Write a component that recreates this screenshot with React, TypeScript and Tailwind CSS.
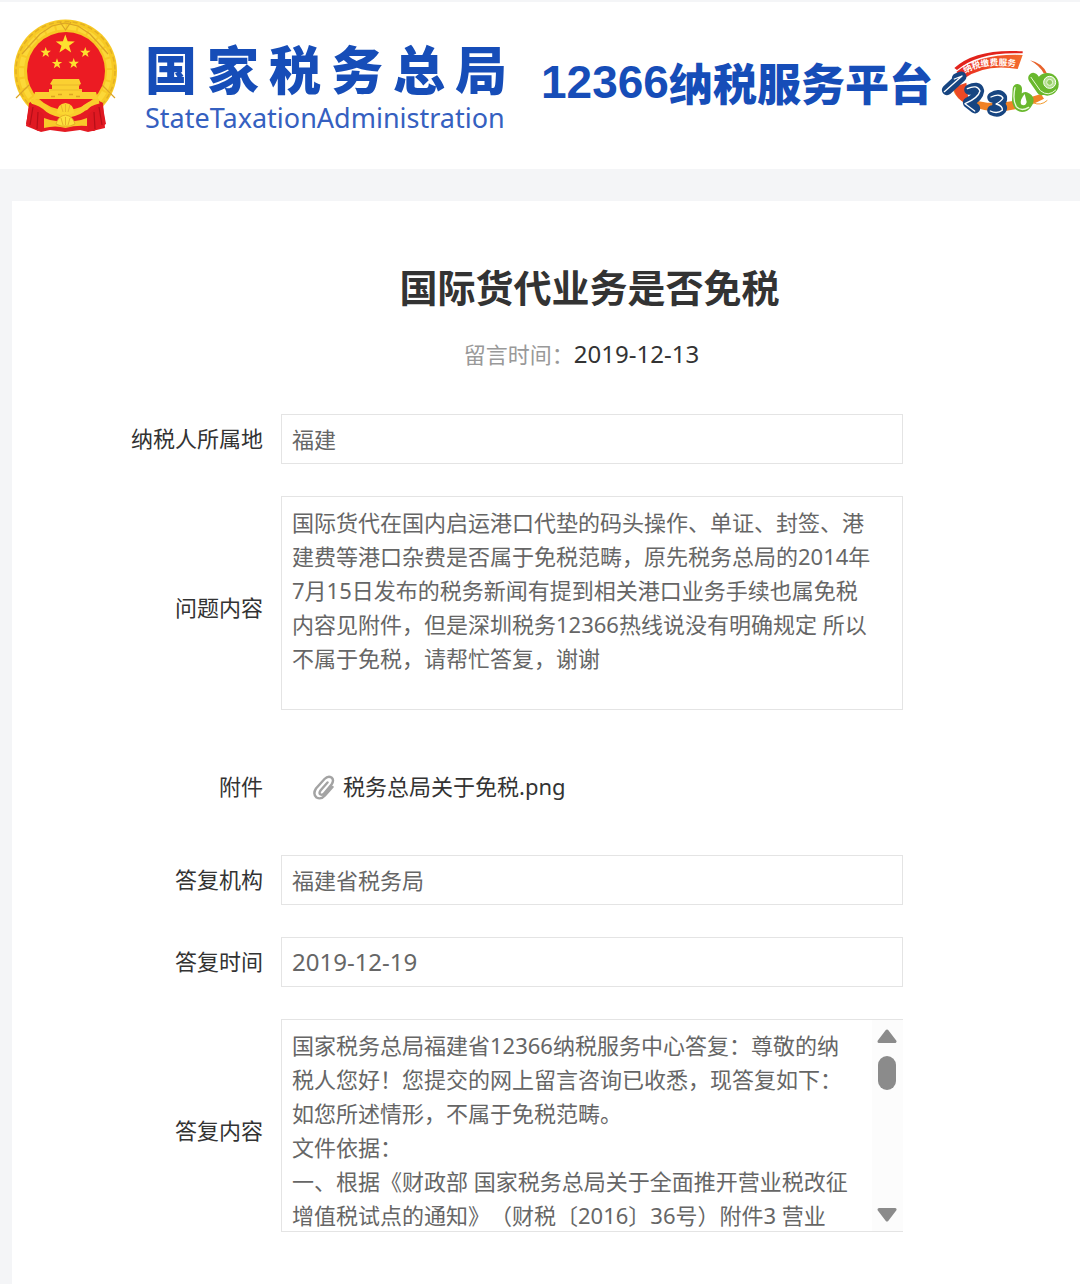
import type { ReactNode } from "react";

const QUESTION =
  "国际货代在国内启运港口代垫的码头操作、单证、封签、港建费等港口杂费是否属于免税范畴，原先税务总局的2014年7月15日发布的税务新闻有提到相关港口业务手续也属免税\n内容见附件，但是深圳税务12366热线说没有明确规定 所以不属于免税，请帮忙答复，谢谢";

const ANSWER =
  "国家税务总局福建省12366纳税服务中心答复：尊敬的纳税人您好！您提交的网上留言咨询已收悉，现答复如下：\n如您所述情形，不属于免税范畴。\n文件依据：\n一、根据《财政部 国家税务总局关于全面推开营业税改征增值税试点的通知》（财税〔2016〕36号）附件3 营业";

const STAR = "M0-10 2.4-3.2 9.5-3.1 3.8 1.2 5.9 8.1 0 4 -5.9 8.1 -3.8 1.2 -9.5-3.1 -2.4-3.2Z";

function Emblem() {
  return (
    <svg viewBox="13 19 104 114" className="h-[114px] w-[104px] shrink-0" role="img" aria-label="国徽">
      <circle cx="65.5" cy="71" r="51.5" fill="#f7c925" />
      <circle cx="65.5" cy="71" r="49.5" fill="none" stroke="#e3b024" strokeWidth="1.5" strokeDasharray="5 3" />
      <circle cx="65.5" cy="71" r="44" fill="none" stroke="#fcd838" strokeWidth="5" strokeDasharray="9 2" />
      <path d="M22 54l8-9 10-11 12-8 13-3 13 3 12 8 10 11 8 9M16 98l13-13M115 98l-13-13M60 22l5.500 8 5.500-8" fill="none" stroke="#dba426" strokeWidth="1.200" />
      <circle cx="66" cy="71" r="39" fill="#ec1b23" />
      <path d="M29 103l6-3 10 10 20 6 22-6 10-10 6 3 2 25-17 4-8-2-15 2-15-2-9 2-15-6z" fill="#e51b23" />
      <g fill="#fde02f">
        <path d={STAR} transform="translate(65.300 44.500)" />
        <path d={STAR} transform="translate(45.700 52.500) scale(.55)" />
        <path d={STAR} transform="translate(85.300 52.500) scale(.55)" />
        <path d={STAR} transform="translate(57 63.700) scale(.55)" />
        <path d={STAR} transform="translate(73.700 63.500) scale(.55)" />
      </g>
      <path d="M53 79h26l2 5-2 1v4h3v3h14l2 7H33l2-7h14v-3h3v-4l-2-1z" fill="#fbd031" />
      <path d="M52 85h28M50 90h32" stroke="#eab82b" strokeWidth="1" />
      <path d="M51 96.500h4M58 94.500h4M69 94.500h4M76 96.500h4" stroke="#dca322" strokeWidth="1.500" />
      <path d="M31 101q10 2 17 9 7 5 17 5t17-5q7-7 17-9" fill="none" stroke="#f9cd2c" strokeWidth="5" />
      <path d="M57 113q0-9 8.500-10 8.500 1 8.500 10-8 4-17 0z" fill="#fbd631" />
      <path d="M65.500 104v8M61 105l2 7M70 105l-2 7" stroke="#e8b62b" strokeWidth="1" />
      <path d="M44 118q12 5 21.500 2 10 3 21.500-2v8q-11-1-21.500 2-10-3-21.500 0z" fill="#f8c92a" />
      <path d="M56 124q2-8 9.500-9 7.500 1 9.500 9l-5 2h-9z" fill="#fde13c" stroke="#e0a524" strokeWidth=".8" />
      <path d="M65.500 117v8M61 118l2 7M70 118l-2 7" stroke="#e0a524" strokeWidth=".8" />
      <path d="M30 102l14 13v16l-6 0-12-7z" fill="#e01922" />
      <path d="M102 102l-14 13v16l6 0 12-7z" fill="#e01922" />
      <path d="M33 107l-3 18M38 112l-1 17M99 107l3 18M94 112l1 17" stroke="#b50f18" strokeWidth="1.200" />
    </svg>
  );
}

function BureauName() {
  return (
    <svg viewBox="0 0 364 112" className="h-[112px] w-[364px] shrink-0" fill="#164db8">
      <text x="0 62 124 186 248 310" y="63" fontSize="52" fontWeight="900" fontFamily="'Noto Sans CJK SC', sans-serif">
        国家税务总局
      </text>
      <text x="0" y="101" fontSize="27" fill="#3560c0" fontFamily="'Noto Sans', sans-serif">
        StateTaxationAdministration
      </text>
    </svg>
  );
}

function HotlineBadge() {
  return (
    <svg viewBox="0 0 420 270" className="h-[90px] w-[140px] shrink-0" role="img" aria-label="12366">
      <defs>
        <path id="band" d="M108 100Q165 66 272 81" />
        <linearGradient id="swoosh" x1="0" y1="0" x2="1" y2="0">
          <stop offset="0" stopColor="#e9261f" />
          <stop offset="1" stopColor="#f36c2c" />
        </linearGradient>
      </defs>
      <path d="M76 84Q140 25 281 34L281 40Q150 34 84 90Z" fill="#e2231c" />
      <path d="M82 96Q150 40 281 45L266 87Q170 70 104 116Z" fill="url(#swoosh)" />
      <path d="M78 132Q84 176 175 188Q255 190 336 162L345 176Q270 216 190 214Q90 200 72 150Z" fill="#f08226" />
      <path d="M74 142Q82 184 120 192L112 128Z" fill="#ed4925" />
      <path d="M303 61Q343 70 355 103L344 100Q333 78 303 61Z" fill="#e8632c" />
      <path d="M312 188Q335 199 355 181" fill="none" stroke="#f39a2b" strokeWidth="3" />
      <text fontSize="26" fontWeight="700" fill="#fff" fontFamily="'Noto Sans CJK SC', sans-serif">
        <textPath href="#band">纳税缴费服务</textPath>
      </text>
      <g fill="none" strokeLinecap="round" strokeLinejoin="round">
        <g stroke="#174581" strokeWidth="31">
          <path d="M54 150L97 110L84 115" />
          <path d="M121 149Q147 136 150 153Q148 172 117 188L138 205" />
          <path d="M190 172Q210 159 219 173Q221 184 205 192Q223 199 217 208Q207 219 190 211" />
        </g>
        <g stroke="#fff" strokeWidth="4">
          <path d="M46 155L99 108L76 117" />
          <path d="M115 146Q145 132 153 153Q148 174 108 191L137 213" />
          <path d="M186 171Q213 158 222 174Q217 184 201 192Q222 197 220 211Q204 223 184 213" />
        </g>
        <path d="M265 146L263 182Q268 208 288 200Q311 178 289 170Q278 176 269 192" fill="#69b82d" stroke="#69b82d" strokeWidth="28" />
        <path d="M258 143Q250 180 262 200Q277 216 299 202" stroke="#eafbd9" strokeWidth="4" />
        <path d="M313 114L338 150" stroke="#69b82d" strokeWidth="31" />
      </g>
      <circle cx="355" cy="133" r="34" fill="#69b82d" />
      <circle cx="362" cy="127" r="18" fill="#b5df91" stroke="#fff" strokeWidth="3" />
      <circle cx="362" cy="127" r="9" fill="#92cc61" stroke="#eafbd9" strokeWidth="3" />
      <path d="M306 112L334 152Q358 172 380 150" fill="none" stroke="#eafbd9" strokeWidth="3" strokeLinecap="round" />
      <path d="M287 162Q271 182 276 193Q289 201 293 186Z" fill="#fff" />
    </svg>
  );
}

function PaperClip() {
  return (
    <svg viewBox="0 0 22 26" className="h-[26px] w-[22px] shrink-0" fill="none" strokeLinecap="round" aria-hidden="true">
      <path
        d="M14.500 8.500L7.500 16.500Q5.500 19.500 7.500 20.500Q9.500 21.500 11.500 19L18.500 10.500Q21.500 6 18.500 3.500Q15 1.500 11.500 5L3 14.500Q-.5 20 3.500 23.500Q8 26 12 21.500L19.500 13"
        stroke="#a3a3a3"
        strokeWidth="2.400"
      />
    </svg>
  );
}

function Row({ label, htmlFor, tall, children }: { label: string; htmlFor?: string; tall?: boolean; children: ReactNode }) {
  const cls = "w-[251px] shrink-0 text-right leading-8 text-[#333]";
  return (
    <div className="flex items-center gap-[18px]">
      {htmlFor ? (
        <label htmlFor={htmlFor} className={tall ? cls + " pt-2" : cls + " pb-0.5"}>
          {label}
        </label>
      ) : (
        <span className={cls + " pt-1.5"}>{label}</span>
      )}
      <div className="min-w-0 flex-1">{children}</div>
    </div>
  );
}

const INPUT = "block h-[50px] w-full border border-[#e4e4e4] bg-white px-[10px] pb-0.5 text-[#666] outline-none";

export default function App() {
  return (
    <div className="h-screen overflow-hidden bg-[#f4f5f7] font-['Noto_Sans','Noto_Sans_CJK_SC',sans-serif] text-[22px] [text-spacing-trim:space-all]">
      <header className="flex h-[169px] items-start border-t-2 border-[#f4f5f7] bg-white pt-[17px] pl-[13px]">
        <Emblem />
        <div className="ml-7 pt-2">
          <BureauName />
        </div>
        <div className="ml-8 flex shrink-0 items-center pt-[30px] text-[#164db8]">
          <span className="font-['Liberation_Sans',sans-serif] text-[46px] leading-[66px] font-bold">12366</span>
          <span className="font-['Noto_Sans_CJK_SC',sans-serif] text-[44px] leading-[66px] font-black">纳税服务平台</span>
        </div>
        <div className="-ml-1 pt-[21px]">
          <HotlineBadge />
        </div>
      </header>

      <main className="mt-8 ml-3 bg-white pt-14 pb-14">
        <div className="pl-[87px] text-center">
          <h1 className="text-[38px] leading-[60px] font-bold text-[#333]">国际货代业务是否免税</h1>
          <p className="mt-5 pr-4 leading-[34px] text-[#333]">
            <span className="text-[#999]">留言时间：</span>
            <time className="text-[24px]">2019-12-13</time>
          </p>
        </div>

        <form className="mt-[43px] flex flex-col gap-8 pr-[177px]">
          <Row label="纳税人所属地" htmlFor="region">
            <input id="region" readOnly defaultValue="福建" className={INPUT} />
          </Row>
          <Row label="问题内容" htmlFor="question" tall>
            <textarea
              id="question"
              readOnly
              defaultValue={QUESTION}
              className="block h-[214px] w-full resize-none overflow-hidden border border-[#e4e4e4] py-2 pr-6 pl-[10px] leading-[34px] text-[#666] outline-none"
            />
          </Row>
          <Row label="附件">
            <a href="#attachment" className="flex h-[81px] items-center gap-2 pt-2 pl-8 text-[#333]">
              <PaperClip />
              税务总局关于免税.png
            </a>
          </Row>
          <Row label="答复机构" htmlFor="office">
            <input id="office" readOnly defaultValue="福建省税务局" className={INPUT} />
          </Row>
          <Row label="答复时间" htmlFor="date">
            <input id="date" readOnly defaultValue="2019-12-19" className={INPUT + " text-[24px]"} />
          </Row>
          <Row label="答复内容" htmlFor="answer" tall>
            <div className="flex h-[213px] border-y border-l border-[#e4e4e4]">
              <textarea
                id="answer"
                readOnly
                defaultValue={ANSWER}
                className="block min-w-0 flex-1 resize-none overflow-hidden pt-2 pr-5 pl-[10px] leading-[34px] text-[#666] outline-none"
              />
              <div className="flex w-[31px] shrink-0 flex-col items-center bg-[#fcfcfc] pt-2 pr-0.5 pb-2">
                <button type="button" aria-label="向上滚动">
                  <svg viewBox="0 0 20 16" className="h-4 w-5" fill="#8b8b8b" stroke="#8b8b8b" strokeWidth="3" strokeLinejoin="round">
                    <path d="M10 3L18 13.500H2Z" />
                  </svg>
                </button>
                <div className="mt-3 h-[34px] w-[18px] rounded-full bg-[#8b8b8b]" />
                <button type="button" aria-label="向下滚动" className="mt-auto">
                  <svg viewBox="0 0 20 16" className="h-4 w-5" fill="#8b8b8b" stroke="#8b8b8b" strokeWidth="3" strokeLinejoin="round">
                    <path d="M10 13L18 2.500H2Z" />
                  </svg>
                </button>
              </div>
            </div>
          </Row>
        </form>
      </main>
    </div>
  );
}
